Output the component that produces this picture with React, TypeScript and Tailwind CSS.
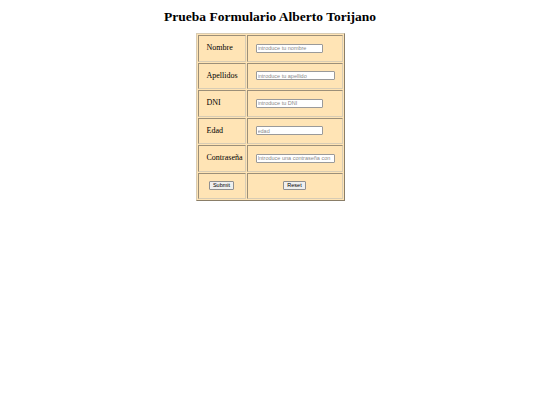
const fields = [
  { label: 'Nombre', placeholder: 'introduce tu nombre', w: 'w-[67px]' },
  { label: 'Apellidos', placeholder: 'introduce tu apellido', w: 'w-[79px]' },
  { label: 'DNI', placeholder: 'introduce tu DNI', w: 'w-[67px]' },
  { label: 'Edad', placeholder: 'edad', w: 'w-[67px]' },
  { label: 'Contraseña', placeholder: 'Introduce una contraseña con', w: 'w-[79px]' },
]

const cell = 'border border-t-[#9c8f78] border-l-[#9c8f78] border-b-[#d8ccb4] border-r-[#d8ccb4] bg-[#ffe4b5] text-[8px] leading-[10px] align-middle'
const btn = "mx-auto block h-[9px] rounded-[1px] border border-[#8f8f8f] bg-[#efefef] px-[3px] font-['Liberation_Sans',sans-serif] text-[5.5px] leading-[7px]"

export default function App() {
  return (
    <div className="min-h-[405px] bg-white font-['Liberation_Serif',serif] text-black">
      <h1 className="pt-[8px] text-center text-[13.5px] font-bold leading-[17px]">
        Prueba Formulario Alberto Torijano
      </h1>
      <form className="mt-[8px] flex justify-center">
        <table className="w-[149px] border border-t-[#d8ccb4] border-l-[#d8ccb4] border-b-[#8a7e68] border-r-[#8a7e68] border-separate border-spacing-[1px] bg-[#ffe4b5]">
          <tbody>
            {fields.map((f) => (
              <tr key={f.label} className="h-[26.5px]">
                <td className={`${cell} w-[47px] pl-[8px] pr-[2px]`}>{f.label}</td>
                <td className={`${cell} pl-[8px]`}>
                  <input
                    placeholder={f.placeholder}
                    className={`${f.w} block h-[9px] rounded-[1px] border border-[#9a9a9a] bg-white px-[1px] font-['Liberation_Sans',sans-serif] text-[5.5px] leading-[7px] placeholder:text-[#8a8a8a]`}
                  />
                </td>
              </tr>
            ))}
            <tr className="h-[26.5px]">
              <td className={cell}>
                <button type="button" className={btn}>Submit</button>
              </td>
              <td className={cell}>
                <button type="reset" className={btn}>Reset</button>
              </td>
            </tr>
          </tbody>
        </table>
      </form>
    </div>
  )
}
